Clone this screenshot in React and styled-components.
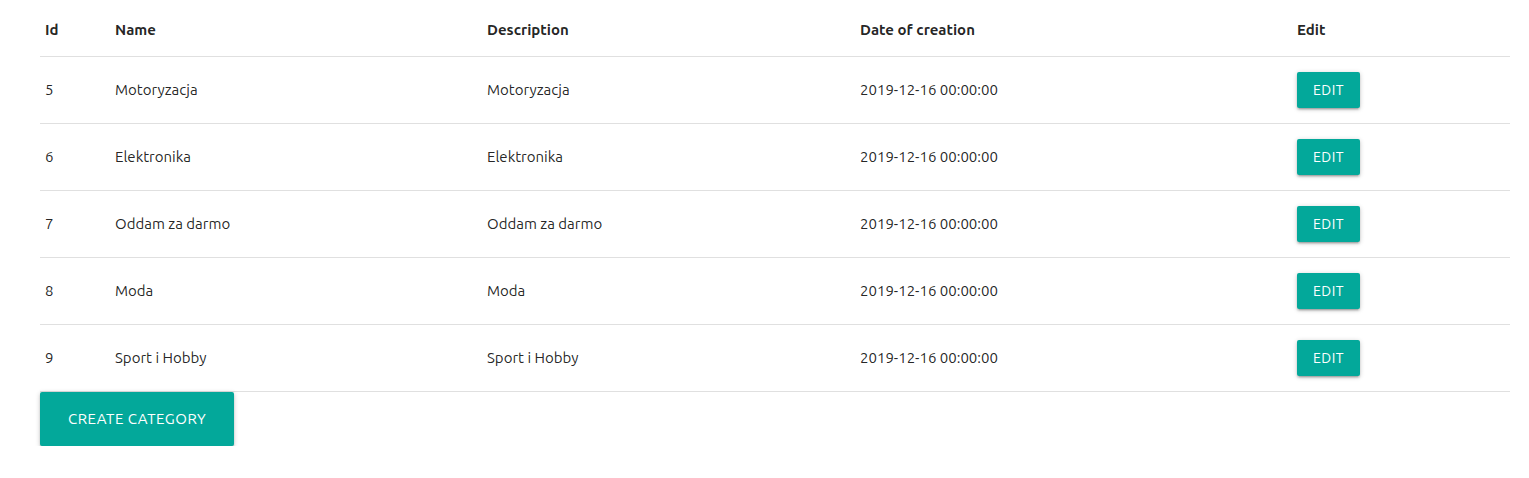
import React from "react";
import styled, { createGlobalStyle } from "styled-components";

const Global = createGlobalStyle`
  html, body { margin: 0; padding: 0; background: #fff; }
  body {
    font-family: "Ubuntu", "Noto Sans", "Open Sans", sans-serif;
    font-size: 15px;
    color: rgba(0, 0, 0, 0.87);
  }
`;

const Page = styled.div`
  padding: 4px 19px 0 40px;
`;

const Table = styled.table`
  width: 1470px;
  border-collapse: collapse;
  border-spacing: 0;
  table-layout: fixed;
`;

const Row = styled.tr`
  border-bottom: 1px solid rgba(0, 0, 0, 0.12);
`;

const Th = styled.th`
  box-sizing: border-box;
  text-align: left;
  font-weight: 700;
  padding: 15px 5px;
  line-height: 22px;
  font-size: 15px;
  width: ${(p) => p.$w}px;
`;

const Td = styled.td`
  padding: 15px 5px;
  line-height: 36px;
  font-size: 15px;
  vertical-align: middle;
`;

const Button = styled.button`
  display: inline-block;
  vertical-align: top;
  border: none;
  border-radius: 2px;
  background: #03a89a;
  color: #fff;
  font-family: inherit;
  text-transform: uppercase;
  letter-spacing: 0.5px;
  cursor: pointer;
  height: ${(p) => (p.$large ? 54 : 36)}px;
  line-height: ${(p) => (p.$large ? 54 : 36)}px;
  padding: 0 ${(p) => (p.$large ? 28 : 16)}px;
  font-size: ${(p) => (p.$large ? 15 : 14)}px;
  box-shadow: 0 2px 2px 0 rgba(0, 0, 0, 0.14), 0 3px 1px -2px rgba(0, 0, 0, 0.12),
    0 1px 5px 0 rgba(0, 0, 0, 0.2);
`;

const rows = [
  { id: 5, name: "Motoryzacja" },
  { id: 6, name: "Elektronika" },
  { id: 7, name: "Oddam za darmo" },
  { id: 8, name: "Moda" },
  { id: 9, name: "Sport i Hobby" },
];

export default function App() {
  return (
    <Page>
      <Global />
      <Table>
        <thead>
          <Row>
            <Th $w={70}>Id</Th>
            <Th $w={372}>Name</Th>
            <Th $w={373}>Description</Th>
            <Th $w={437}>Date of creation</Th>
            <Th $w={218}>Edit</Th>
          </Row>
        </thead>
        <tbody>
          {rows.map((r) => (
            <Row key={r.id}>
              <Td>{r.id}</Td>
              <Td>{r.name}</Td>
              <Td>{r.name}</Td>
              <Td>2019-12-16 00:00:00</Td>
              <Td>
                <Button>Edit</Button>
              </Td>
            </Row>
          ))}
        </tbody>
      </Table>
      <Button $large>Create category</Button>
    </Page>
  );
}
